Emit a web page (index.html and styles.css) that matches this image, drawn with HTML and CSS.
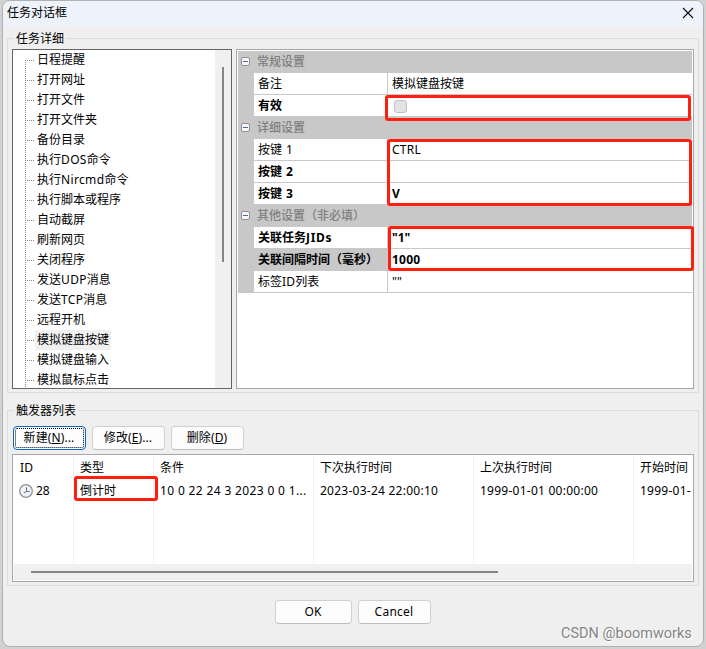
FILE: index.html
```
<!DOCTYPE html>
<html lang="zh-CN">
<head>
<meta charset="utf-8">
<title>任务对话框</title>
<link rel="stylesheet" href="styles.css">
</head>
<body>
<main class="dialog">
  <header class="titlebar">
    <span>任务对话框</span>
    <svg class="close" viewBox="0 0 12 12" width="12" height="12"><path d="M1 1 11 11M11 1 1 11" fill="none" stroke="#111" stroke-width="1.2"/></svg>
  </header>

  <section class="group details">
    <h2 class="group-label">任务详细</h2>
    <div class="panes">
      <div class="tree">
        <ul class="tree-list">
          <li><span>日程提醒</span></li>
          <li><span>打开网址</span></li>
          <li><span>打开文件</span></li>
          <li><span>打开文件夹</span></li>
          <li><span>备份目录</span></li>
          <li><span>执行<b>DOS</b>命令</span></li>
          <li><span>执行<b>Nircmd</b>命令</span></li>
          <li><span>执行脚本或程序</span></li>
          <li><span>自动截屏</span></li>
          <li><span>刷新网页</span></li>
          <li><span>关闭程序</span></li>
          <li><span>发送<b>UDP</b>消息</span></li>
          <li><span>发送<b>TCP</b>消息</span></li>
          <li><span>远程开机</span></li>
          <li><span class="current">模拟键盘按键</span></li>
          <li><span>模拟键盘输入</span></li>
          <li><span>模拟鼠标点击</span></li>
        </ul>
        <div class="vscroll"><div class="vthumb"></div></div>
      </div>
      <div class="props">
        <div class="cat"><i class="fold"></i>常规设置</div>
        <div class="prop"><div class="name">备注</div><div class="value">模拟键盘按键</div></div>
        <div class="prop bold"><div class="name">有效</div><div class="value"><i class="check"></i></div></div>
        <div class="cat"><i class="fold"></i>详细设置</div>
        <div class="prop"><div class="name key">按键 1</div><div class="value latin">CTRL</div></div>
        <div class="prop bold"><div class="name key">按键 2</div><div class="value"></div></div>
        <div class="prop bold"><div class="name key">按键 3</div><div class="value">V</div></div>
        <div class="cat"><i class="fold"></i>其他设置（非必填）</div>
        <div class="prop bold"><div class="name">关联任务<span class="jids">JIDs</span></div><div class="value">"1"</div></div>
        <div class="prop bold active"><div class="name">关联间隔时间（毫秒）</div><div class="value latin">1000</div></div>
        <div class="prop"><div class="name">标签<span class="latin">ID</span>列表</div><div class="value">""</div></div>
      </div>
    </div>
  </section>

  <section class="group triggers">
    <h2 class="group-label">触发器列表</h2>
    <div class="toolbar">
      <button class="btn focused">新建(<u>N</u>)...</button>
      <button class="btn">修改(<u>E</u>)...</button>
      <button class="btn">删除(<u>D</u>)</button>
    </div>
    <div class="list">
      <div class="columns">
        <div class="col"><div class="head latin">ID</div><div class="cell id">
          <svg viewBox="0 0 14 14" width="14" height="14"><circle cx="7" cy="7" r="6.3" fill="#eef3f8" stroke="#8f9194" stroke-width="1.3"/><path d="M7.5 3.2V7.5H10.8M7.5 7.5 4.8 9" fill="none" stroke="#60758c" stroke-width="1"/></svg>28</div></div>
        <div class="col"><div class="head">类型</div><div class="cell">倒计时</div></div>
        <div class="col"><div class="head">条件</div><div class="cell cond">10 0 22 24 3 2023 0 0 1...</div></div>
        <div class="col"><div class="head">下次执行时间</div><div class="cell date">2023-03-24 22:00:10</div></div>
        <div class="col"><div class="head">上次执行时间</div><div class="cell date">1999-01-01 00:00:00</div></div>
        <div class="col"><div class="head">开始时间</div><div class="cell date">1999-01-</div></div>
      </div>
      <div class="hscroll"><div class="hthumb"></div></div>
    </div>
  </section>

  <footer class="actions">
    <button class="btn ok">OK</button>
    <button class="btn cancel">Cancel</button>
  </footer>
</main>
<div class="mark mark-enabled"></div>
<div class="mark mark-keys"></div>
<div class="mark mark-related"></div>
<div class="mark mark-type"></div>
<div class="watermark">CSDN @boomworks</div>
</body>
</html>
```

FILE: styles.css
```
* { box-sizing: border-box; }
body {
  margin: 0;
  width: 706px;
  height: 649px;
  overflow: hidden;
  padding: 0 2px 2px;
  background: #d2d2d2;
  font: 12px/20px "Noto Sans", "Noto Sans CJK SC", sans-serif;
  color: #000;
  white-space: nowrap;
}
.dialog {
  width: 702px;
  height: 647px;
  border: 1px solid #b0b0b0;
  border-radius: 8px;
  background: #efefef;
  overflow: hidden;
}
.titlebar {
  display: flex;
  justify-content: space-between;
  height: 25px;
  padding: 2px 9px 0 4px;
  background: #eef3fb;
}
.close { margin-top: 4px; }

.group {
  margin: 0 4px;
  border: 1px solid #dcdcdc;
}
.details { margin-top: 12px; height: 355px; }
.triggers { margin-top: 17px; height: 176px; }
.group-label {
  width: max-content;
  margin: -10px 0 0 6px;
  padding: 0 2px;
  background: #efefef;
  font: inherit;
  line-height: 20px;
}
.panes {
  display: flex;
  gap: 4px;
  padding-left: 4px;
}
.tree {
  display: flex;
  justify-content: space-between;
  width: 220px;
  height: 340px;
  border: 1px solid #646464;
  background: #fff;
  overflow: hidden;
}
.tree-list {
  margin: 0;
  padding: 0 0 0 12px;
  list-style: none;
}
.tree-list li {
  display: flex;
  align-items: center;
  height: 20px;
  background: repeating-linear-gradient(to bottom, #888 0 1px, transparent 1px 2px) 0 0 / 1px 100% no-repeat;
}
.tree-list li:first-child { background-position: 0 10px; }
.tree-list li::before {
  content: "";
  width: 9px;
  height: 1px;
  background: repeating-linear-gradient(to right, #888 0 1px, transparent 1px 2px);
}
.tree-list span { margin-left: 1px; padding: 0 2px; line-height: 20px; }
.tree-list b { font-weight: 400; letter-spacing: .35px; }
.tree-list .current { background: #f0f0f0; }
.vscroll { width: 16px; padding: 17px 7px 0; background: #f0f0f0; }
.vthumb { width: 2px; height: 195px; background: #858585; }

.props {
  width: 458px;
  height: 340px;
  padding: 1px;
  border: 1px solid #a5a7aa;
  background: #fff;
}
.cat, .prop { display: flex; height: 22px; line-height: 21px; }
.cat { align-items: center; padding-bottom: 2px; background: #c8c8c8; color: #808080; font-weight: 500; }
.fold {
  width: 9px;
  height: 9px;
  margin: 0 7px 0 3px;
  border: 1px solid #919191;
  border-radius: 2px;
  background: linear-gradient(#4b63a7, #4b63a7) center / 5px 1px no-repeat #f7f7f7;
}
.prop { padding-left: 16px; background: #c8c8c8; }
.name {
  width: 134px;
  padding-left: 4px;
  border-right: 1px solid #c8c8c8;
  border-bottom: 1px solid #c8c8c8;
  background: #fff;
}
.value { flex: 1; padding-left: 4px; border-bottom: 1px solid #c8c8c8; background: #fff; }
.bold { font-weight: 700; }
.latin { letter-spacing: .25px; }
.key { word-spacing: 1px; }
.jids { letter-spacing: .65px; }
.active .name { background: #c8c8c8; }
.check {
  display: block;
  width: 13px;
  height: 13px;
  margin: 5px 0 0 2px;
  border: 1px solid #c0c0c0;
  border-radius: 3px;
  background: #e3e3e3;
}

.toolbar { display: flex; gap: 6px; padding: 5px 0 0 5px; }
.btn {
  width: 73px;
  height: 24px;
  margin: 0;
  padding: 0 1px 0 0;
  border: 1px solid #d0d0d0;
  border-bottom-color: #bdbdbd;
  border-radius: 4px;
  background: #fdfdfd;
  color: #000;
  font: inherit;
  letter-spacing: .1px;
}
.focused {
  border-color: #0067c0;
  outline: 1px dotted #000;
  outline-offset: -3px;
}
.list {
  width: 682px;
  height: 128px;
  margin: 4px 0 0 4px;
  padding: 1px;
  border: 1px solid #a5a7aa;
  background: #fff;
}
.columns {
  display: grid;
  grid-template-columns: 60px 80px 160px 160px 160px 58px;
  height: 108px;
}
.col { min-width: 0; padding-left: 6px; border-right: 1px solid #edf3fa; overflow: hidden; }
.col:last-child { border-right: 0; }
.head { height: 24px; line-height: 23px; }
.cell { height: 23px; line-height: 21px; }
.id { display: flex; align-items: center; gap: 3px; height: 21px; margin-left: -1px; }
.cond { letter-spacing: .35px; }
.date { letter-spacing: .25px; }
.hscroll { height: 16px; padding: 7px 0 0 17px; background: #f0f0f0; }
.hthumb { width: 467px; height: 2px; background: #858585; }

.actions { display: flex; gap: 6px; margin: 14px 0 0 272px; }
.ok { width: 77px; }
.cancel { letter-spacing: .25px; }

.mark { position: absolute; border: 3px solid #ff1e10; border-radius: 3px; }
.mark-enabled { left: 385px; top: 95px; width: 306px; height: 26px; }
.mark-keys { left: 387px; top: 139px; width: 305px; height: 67px; }
.mark-related { left: 388px; top: 226px; width: 306px; height: 45px; }
.mark-type { left: 74px; top: 476px; width: 84px; height: 25px; }
.watermark {
  position: absolute;
  left: 561px;
  top: 624px;
  color: #858585;
  font: 14.5px/20px Roboto, sans-serif;
  text-shadow: 1px 1px #fff;
}
```
